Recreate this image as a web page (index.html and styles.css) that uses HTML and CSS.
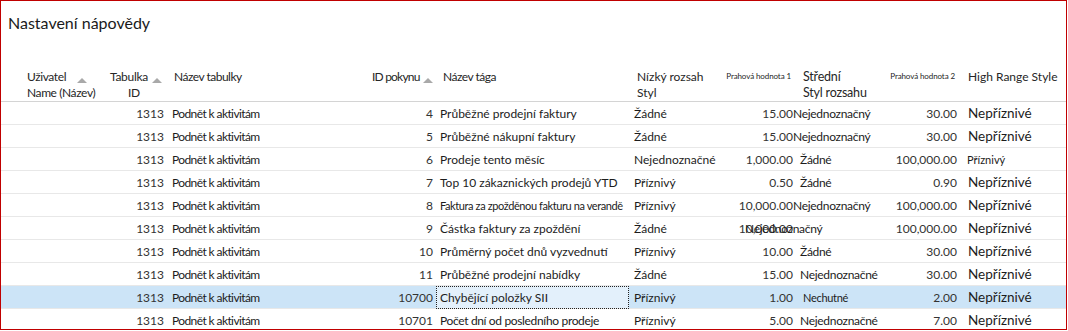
FILE: index.html
```html
<!DOCTYPE html>
<html lang="cs">
<head>
<meta charset="utf-8">
<title>Nastavení nápovědy</title>
<link rel="stylesheet" href="styles.css">
</head>
<body>
<div class="frame">
  <h1 class="title">Nastavení nápovědy</h1>
  <table class="grid">
    <colgroup>
      <col class="w1"><col class="w2"><col class="w3"><col class="w4"><col class="w5">
      <col class="w6"><col class="w7"><col class="w8"><col class="w9"><col class="w10">
    </colgroup>
    <thead>
      <tr>
        <th class="h-user">
          <div class="hline">Uživatel<span class="sort s-user"></span></div>
          <div class="hline">Name (Název)</div>
        </th>
        <th class="h-tab">
          <div class="hline">Tabulka<span class="sort s-tab"></span></div>
          <div class="hline h-idline">ID</div>
        </th>
        <th class="h-left h-tight">Název tabulky</th>
        <th class="h-id"><div class="hline">ID pokynu<span class="sort s-id"></span></div></th>
        <th class="h-left h-tight">Název tága</th>
        <th class="h-left h-low">Nízký rozsah<br>Styl</th>
        <th class="h-tiny">Prahová hodnota 1</th>
        <th class="h-left h-mid">Střední<br>Styl rozsahu</th>
        <th class="h-tiny">Prahová hodnota 2</th>
        <th class="h-left h-high">High Range Style</th>
      </tr>
    </thead>
    <tbody>
      <tr>
        <td></td><td class="num">1313</td><td class="txt tab">Podnět k aktivitám</td><td class="num">4</td>
        <td class="txt">Průběžné prodejní faktury</td><td class="txt low">Žádné</td><td class="num">15.00</td>
        <td class="txt mid"><span class="glued">Nejednoznačný</span></td><td class="num">30.00</td><td class="txt big">Nepříznivé</td>
      </tr>
      <tr>
        <td></td><td class="num">1313</td><td class="txt tab">Podnět k aktivitám</td><td class="num">5</td>
        <td class="txt">Průběžné nákupní faktury</td><td class="txt low">Žádné</td><td class="num">15.00</td>
        <td class="txt mid"><span class="glued">Nejednoznačný</span></td><td class="num">30.00</td><td class="txt big">Nepříznivé</td>
      </tr>
      <tr>
        <td></td><td class="num">1313</td><td class="txt tab">Podnět k aktivitám</td><td class="num">6</td>
        <td class="txt">Prodeje tento měsíc</td><td class="txt low">Nejednoznačné</td><td class="num">1,000.00</td>
        <td class="txt mid">Žádné</td><td class="num">100,000.00</td><td class="txt small-high">Příznivý</td>
      </tr>
      <tr>
        <td></td><td class="num">1313</td><td class="txt tab">Podnět k aktivitám</td><td class="num">7</td>
        <td class="txt">Top 10 zákaznických prodejů YTD</td><td class="txt low">Příznivý</td><td class="num">0.50</td>
        <td class="txt mid">Žádné</td><td class="num">0.90</td><td class="txt big">Nepříznivé</td>
      </tr>
      <tr>
        <td></td><td class="num">1313</td><td class="txt tab">Podnět k aktivitám</td><td class="num">8</td>
        <td class="txt small">Faktura za zpožděnou fakturu na verandě</td><td class="txt low">Příznivý</td><td class="num">10,000.00</td>
        <td class="txt mid"><span class="glued">Nejednoznačný</span></td><td class="num">100,000.00</td><td class="txt big">Nepříznivé</td>
      </tr>
      <tr>
        <td></td><td class="num">1313</td><td class="txt tab">Podnět k aktivitám</td><td class="num">9</td>
        <td class="txt">Částka faktury za zpoždění</td><td class="txt low">Žádné</td><td class="num">10,000.00</td>
        <td class="txt mid"><span class="overlap">Nejednoznačný</span></td><td class="num">100,000.00</td><td class="txt big">Nepříznivé</td>
      </tr>
      <tr>
        <td></td><td class="num">1313</td><td class="txt tab">Podnět k aktivitám</td><td class="num">10</td>
        <td class="txt">Průměrný počet dnů vyzvednutí</td><td class="txt low">Příznivý</td><td class="num">10.00</td>
        <td class="txt mid">Žádné</td><td class="num">30.00</td><td class="txt big">Nepříznivé</td>
      </tr>
      <tr>
        <td></td><td class="num">1313</td><td class="txt tab">Podnět k aktivitám</td><td class="num">11</td>
        <td class="txt">Průběžné prodejní nabídky</td><td class="txt low">Žádné</td><td class="num">15.00</td>
        <td class="txt mid">Nejednoznačné</td><td class="num">30.00</td><td class="txt big">Nepříznivé</td>
      </tr>
      <tr class="selected">
        <td></td><td class="num">1313</td><td class="txt tab">Podnět k aktivitám</td><td class="num">10700</td>
        <td class="txt focus">Chybějící položky SII</td><td class="txt low">Příznivý</td><td class="num">1.00</td>
        <td class="txt mid"><span class="nudge">Nechutné</span></td><td class="num">2.00</td><td class="txt big">Nepříznivé</td>
      </tr>
      <tr>
        <td></td><td class="num">1313</td><td class="txt tab">Podnět k aktivitám</td><td class="num">10701</td>
        <td class="txt snug">Počet dní od posledního prodeje</td><td class="txt low">Příznivý</td><td class="num">5.00</td>
        <td class="txt mid">Nejednoznačné</td><td class="num">7.00</td><td class="txt big">Nepříznivé</td>
      </tr>
    </tbody>
  </table>
</div>
</body>
</html>
```
FILE: styles.css
```css
html, body {
  margin: 0;
  padding: 0;
  background: #ffffff;
}

body {
  font-family: Lato, "Liberation Sans", Arial, sans-serif;
  color: #222222;
  width: 1068px;
  height: 331px;
  overflow: hidden;
}

.frame {
  box-sizing: border-box;
  width: 1067px;
  height: 330px;
  border: 1px solid #c00000;
  overflow: hidden;
}

.title {
  margin: 0;
  padding: 12px 0 0 7px;
  height: 58px;
  box-sizing: border-box;
  font-size: 16px;
  font-weight: normal;
  line-height: 20px;
  color: #1a1a1a;
}

.grid {
  border-collapse: collapse;
  table-layout: fixed;
  width: 1065px;
  font-size: 12px;
}

.w1 { width: 104px; }
.w2 { width: 62px; }
.w3 { width: 195px; }
.w4 { width: 74px; }
.w5 { width: 193px; }
.w6 { width: 94px; }
.w7 { width: 73px; }
.w8 { width: 90px; }
.w9 { width: 74px; }
.w10 { width: 106px; }

thead th {
  font-weight: normal;
  vertical-align: top;
  text-align: left;
  padding: 10px 0 0 0;
  height: 30px;
  line-height: 16px;
  color: #262626;
  border-bottom: 1px solid #d4d4d4;
  white-space: nowrap;
}

.hline {
  height: 16px;
}

.sort {
  display: inline-block;
  vertical-align: -2px;
  width: 0;
  height: 0;
  border-left: 5px solid transparent;
  border-right: 5px solid transparent;
  border-bottom: 5px solid #a9a9a9;
  letter-spacing: 0;
}

.h-user { padding-left: 26px; letter-spacing: -0.4px; }
.s-user { margin-left: 11px; }
.h-tab { padding-left: 5px; letter-spacing: -0.3px; }
.s-tab { margin-left: 4px; }
.h-idline { padding-left: 18px; }
.h-id { padding-left: 10px; letter-spacing: -0.8px; }
.s-id { margin-left: 3px; }
.h-left { padding-left: 7px; }
.h-tight { letter-spacing: -0.5px; }
.h-low { padding-left: 8px; }
.h-mid { padding-left: 7px; font-size: 12.5px; letter-spacing: -0.2px; }
.h-high { padding-left: 8px; font-size: 12px; }

.h-tiny {
  font-size: 8px;
  text-align: right;
  padding-right: 5px;
  padding-top: 12px;
  line-height: 10px;
  letter-spacing: -0.1px;
}

tbody td {
  height: 22px;
  padding: 0;
  border-bottom: 1px solid #e8e8e8;
  white-space: nowrap;
  overflow: visible;
  vertical-align: middle;
  color: #1c1c1c;
}

tbody td.num {
  text-align: right;
  padding-right: 3px;
  color: #333333;
}

tbody td.txt { padding-left: 4px; }
tbody td.tab { padding-left: 5px; letter-spacing: -0.6px; }
tbody td.low { padding-left: 5px; }
tbody td.mid { padding-left: 4px; letter-spacing: -0.3px; }
tbody td.big { padding-left: 8px; font-size: 13.5px; }
tbody td.small-high { padding-left: 7px; font-size: 11px; }
tbody td.small { font-size: 11px; letter-spacing: -0.4px; }
tbody td.snug { letter-spacing: -0.35px; }

.glued { margin-left: -7px; }
.overlap { margin-left: -55px; }
.nudge { margin-left: 3px; font-size: 11px; }

tr.selected td { background: #cce4f7; }
tr.selected td.focus {
  background: #e3f0fb;
  outline: 1px dotted #222222;
  outline-offset: -1px;
}
```
